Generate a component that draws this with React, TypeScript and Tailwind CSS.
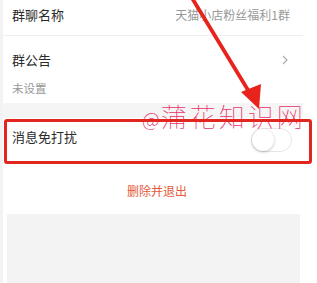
import React from 'react';

const FONT = '"Noto Sans CJK SC", "Noto Sans", sans-serif';

function Toggle() {
  return (
    <div className="relative w-[41px] h-[24px] rounded-full bg-white border border-[#e6e6e6]">
      <div className="absolute left-0 top-0 w-[22px] h-[22px] rounded-full bg-white shadow-[0_1px_3px_rgba(0,0,0,0.25)]" />
    </div>
  );
}

function Arrow() {
  return (
    <svg className="absolute left-0 top-0 pointer-events-none" width="317" height="283" viewBox="0 0 317 283">
      <line x1="192" y1="-2" x2="251" y2="95" stroke="#e8231c" strokeWidth="3.8" strokeLinecap="round" />
      <polygon points="259,109 241,92 261,84" fill="#e8231c" />
    </svg>
  );
}

export default function App() {
  return (
    <div className="relative w-[317px] h-[283px] overflow-hidden bg-white" style={{ fontFamily: FONT }}>
      <div className="flex flex-col w-[303px] h-full border-l-[3px] border-[#f3f3f3]">
        {/* group name */}
        <div className="flex items-start justify-between h-[36px] pt-[5px] pl-[9px] pr-[13px] border-b border-[#eeeeee]">
          <span className="text-[13px] leading-[20px] text-[#2b2b2b]">群聊名称</span>
          <span className="text-[12px] leading-[20px] text-[#999]">天猫小店粉丝福利1群</span>
        </div>
        {/* announcement */}
        <div className="flex flex-col h-[67px] pl-[9px] pr-[13px]">
          <div className="flex items-center justify-between h-[20px] mt-[14px]">
            <span className="text-[13px] leading-[20px] text-[#2b2b2b]">群公告</span>
            <svg width="8" height="12" viewBox="0 0 8 12" className="mr-[1px]">
              <path d="M2 2l4 4-4 4" fill="none" stroke="#aaa" strokeWidth="1.2" />
            </svg>
          </div>
          <span className="mt-[9px] text-[11.5px] leading-[18px] text-[#999]">未设置</span>
        </div>
        <div className="h-[15px] bg-[#f5f5f5]" />
        {/* mute */}
        <div className="flex items-center justify-between h-[45px] pl-[9px] pr-[11px] bg-white">
          <span className="text-[13px] leading-[20px] text-[#2b2b2b] -mt-[7px]">消息免打扰</span>
          <div className="-mt-[2px]">
            <Toggle />
          </div>
        </div>
        {/* delete */}
        <div className="flex items-center justify-center h-[51px] pt-[5px] bg-white">
          <span className="text-[12px] leading-[18px] text-[#e55a3a] ml-[8px]">删除并退出</span>
        </div>
        <div className="flex-1 ml-[4px] mr-[3px] bg-[#f3f3f3]" />
      </div>

      {/* watermark */}
      <div
        className="absolute left-[142px] top-[101px] text-[26px] leading-[30px] font-thin tracking-[3px] text-[#e8336b] whitespace-nowrap"
        style={{ fontFamily: '"Noto Sans CJK SC", sans-serif' }}
      >
        <span className="text-[20px] tracking-[0px] mr-[1px]">@</span>蒲花知识网
      </div>

      {/* highlight box */}
      <div className="absolute left-[4px] top-[119px] w-[308px] h-[45px] border-[3px] border-[#e1261f] rounded-[3px]" />

      <Arrow />
    </div>
  );
}
